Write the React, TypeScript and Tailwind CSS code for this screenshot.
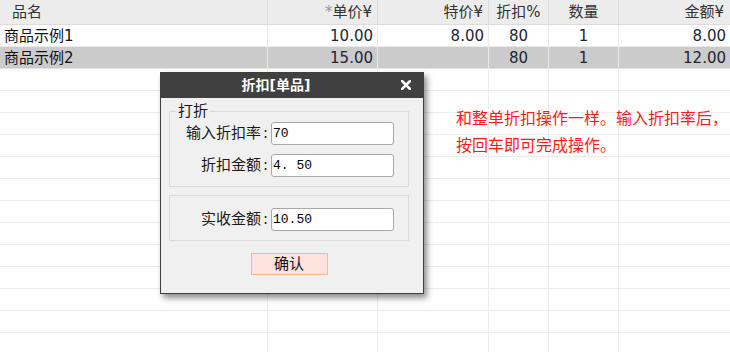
import React from "react";

type Col = { align: "left" | "right" | "center" };

const cols: Col[] = [
  { align: "left" },
  { align: "right" },
  { align: "right" },
  { align: "center" },
  { align: "center" },
  { align: "right" },
];

const gridCols = "grid grid-cols-[268px_110px_111px_60px_70px_111px]";

const alignClass = (a: Col["align"]) =>
  a === "left" ? "justify-start pl-[4px]" : a === "right" ? "justify-end pr-[4px]" : "justify-center";

const rows = [
  ["商品示例1", "10.00", "8.00", "80", "1", "8.00"],
  ["商品示例2", "15.00", "", "80", "1", "12.00"],
];

function Field({ label, value }: { label: string; value: string }) {
  return (
    <div className="flex items-center">
      <span className="w-[98px] text-right text-[15px] text-[#1a1a1a] leading-none whitespace-nowrap">
        {label}
        <span className="font-['DejaVu_Sans'] pl-[2px]">:</span>
      </span>
      <div className="ml-[3px] w-[123px] h-[23px] bg-white border border-[#a8a8a8] rounded-[3px] flex items-center pl-[1px] font-['Liberation_Mono',monospace] text-[13px] text-black">
        {value}
      </div>
    </div>
  );
}

export default function App() {
  return (
    <div className="relative w-[730px] h-[352px] overflow-hidden bg-white font-['DejaVu_Sans','Noto_Sans_CJK_SC',sans-serif] text-[15px]">
      {/* header */}
      <div className={`${gridCols} h-[25px] bg-[#ececec] border-b border-[#dcdcdc] text-[#333]`}>
        <div className="flex items-center pl-[12px] border-r border-[#dcdcdc]">品名</div>
        <div className="flex items-center justify-end pr-[5px] border-r border-[#dcdcdc]">
          <span className="text-[#999]">*</span>单价¥
        </div>
        <div className="flex items-center justify-end pr-[5px] border-r border-[#dcdcdc]">特价¥</div>
        <div className="flex items-center justify-center border-r border-[#dcdcdc]">折扣%</div>
        <div className="flex items-center justify-center border-r border-[#dcdcdc]">数量</div>
        <div className="flex items-center justify-end pr-[6px]">金额¥</div>
      </div>

      {/* data rows */}
      {rows.map((r, i) => (
        <div
          key={i}
          className={`${gridCols} h-[22px] border-b ${i === 1 ? "bg-[#cbcbcb] border-[#e4e4e4]" : "bg-white border-[#ebebeb]"}`}
        >
          {r.map((c, j) => (
            <div
              key={j}
              className={`flex items-center ${alignClass(cols[j].align)} ${j < 5 ? "border-r" : ""} ${i === 1 ? "border-[#e8e8e8]" : "border-[#ebebeb]"} ${j === 0 ? "text-[#111]" : "text-[#1c2638]"}`}
            >
              {c}
            </div>
          ))}
        </div>
      ))}

      {/* empty rows */}
      {Array.from({ length: 13 }).map((_, i) => (
        <div key={i} className={`${gridCols} h-[22px] border-b border-[#ececec]`}>
          {cols.map((_, j) => (
            <div key={j} className={j < 5 ? "border-r border-[#ececec]" : ""} />
          ))}
        </div>
      ))}

      {/* hint */}
      <div className="absolute left-[456px] top-[104px] text-[16px] leading-[27px] text-[#ff1a1a] font-['Noto_Sans_CJK_SC',sans-serif]">
        <div>和整单折扣操作一样。输入折扣率后，</div>
        <div>按回车即可完成操作。</div>
      </div>

      {/* dialog */}
      <div className="absolute left-[160px] top-[72px] w-[264px] h-[222px] bg-[#f0f0f0] border border-[#3f3f3f] shadow-[3px_4px_6px_rgba(0,0,0,0.45)] flex flex-col">
        <div className="h-[25px] bg-[#404040] flex items-center justify-center relative text-white font-bold text-[14px] shrink-0 pr-[32px]">
          折扣[单品]
          <svg className="absolute right-[12px] top-[7px]" width="10" height="10" viewBox="0 0 10 10">
            <path d="M1 1L9 9M9 1L1 9" stroke="white" strokeWidth="2.6" strokeLinecap="square" />
          </svg>
        </div>
        <div className="pl-[8px] pt-[5px] flex flex-col">
          <fieldset className="w-[240px] border border-[#dadada] pb-[9px]">
            <legend className="ml-[7px] px-px text-[15px] leading-[16px] text-[#1a1a1a]">打折</legend>
            <div className="flex flex-col gap-[9px] pt-[3px]">
              <Field label="输入折扣率" value="70" />
              <Field label="折扣金额" value="4. 50" />
            </div>
          </fieldset>
          <div className="mt-[8px] w-[240px] h-[46px] border border-[#dadada] pt-[12px]">
            <Field label="实收金额" value="10.50" />
          </div>
          <div className="w-[240px] flex justify-center mt-[12px]">
            <button className="w-[77px] h-[22px] bg-[#fde3dc] border border-[#f4b898] text-[15px] text-[#111] leading-none">
              确认
            </button>
          </div>
        </div>
      </div>
    </div>
  );
}
